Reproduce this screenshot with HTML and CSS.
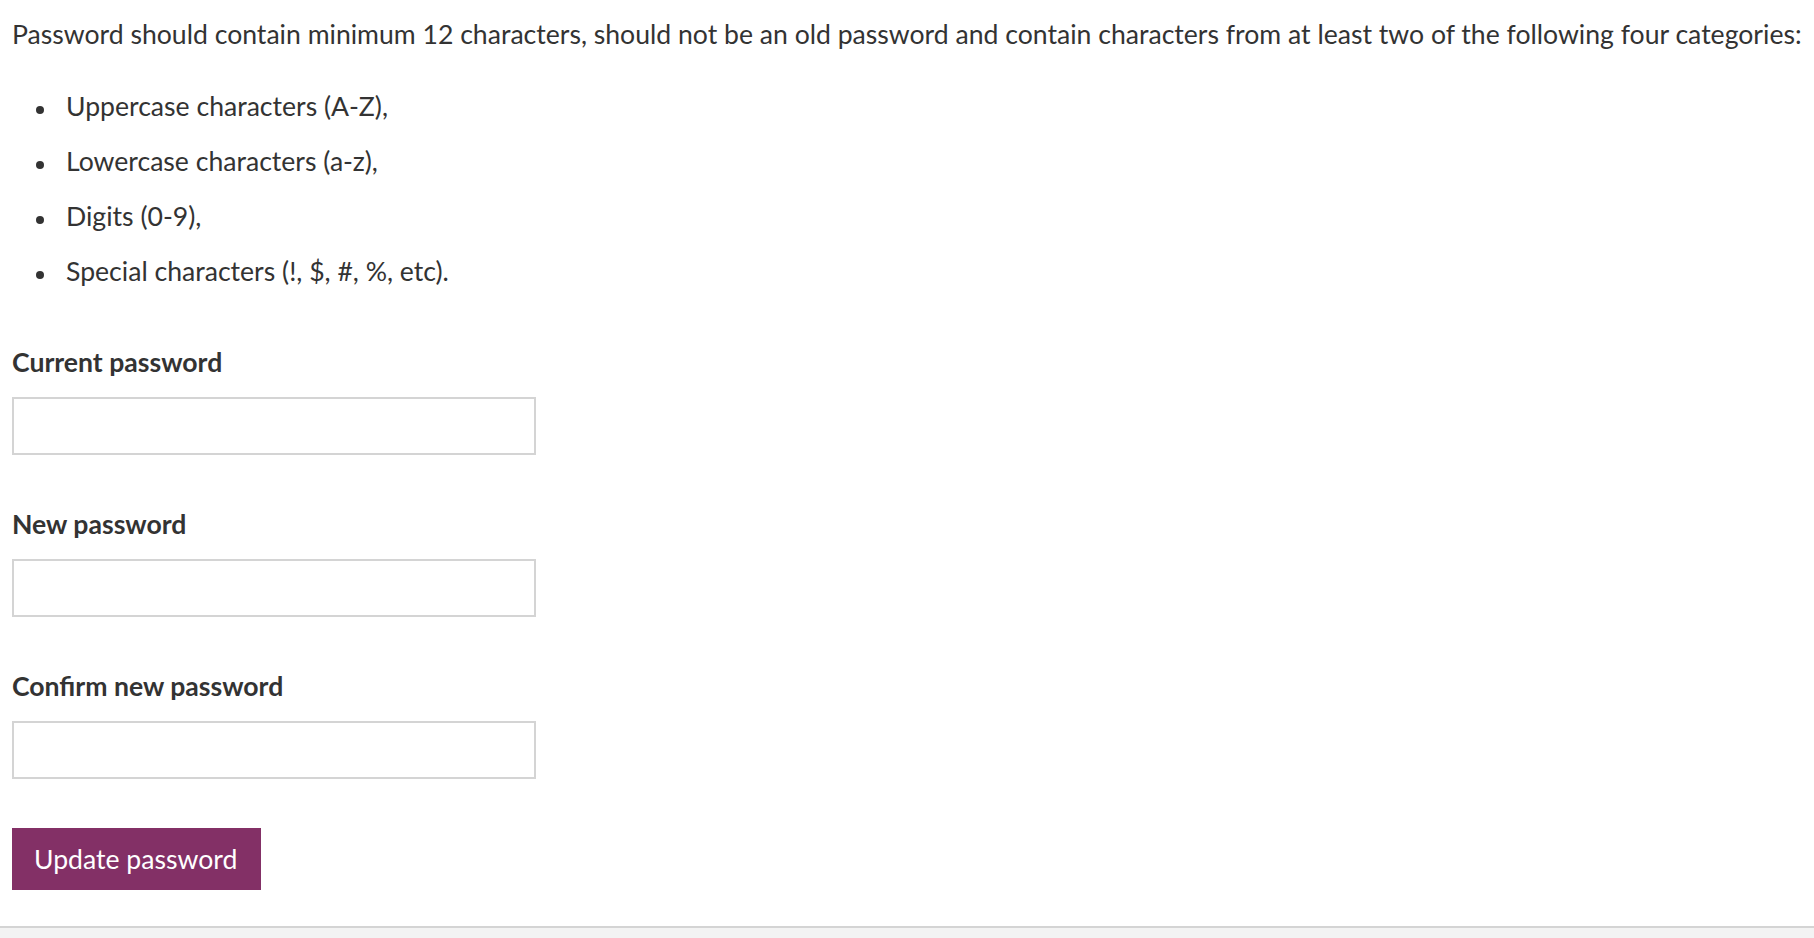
FILE: index.html
```html
<!DOCTYPE html>
<html lang="en">
<head>
<meta charset="utf-8">
<title>Update password</title>
<link rel="stylesheet" href="styles.css">
</head>
<body>
<div class="page">
  <form class="pw-form">
    <p class="intro">Password should contain minimum 12 characters, should not be an old password and contain characters from at least two of the following four categories:</p>
    <ul class="rules">
      <li>Uppercase characters (A-Z),</li>
      <li>Lowercase characters (a-z),</li>
      <li>Digits (0-9),</li>
      <li>Special characters (!, $, #, %, etc).</li>
    </ul>
    <div class="field">
      <label class="field-label" for="cur">Current password</label>
      <input class="field-input" id="cur" type="password">
    </div>
    <div class="field">
      <label class="field-label" for="new">New password</label>
      <input class="field-input" id="new" type="password">
    </div>
    <div class="field">
      <label class="field-label" for="conf">Confirm new password</label>
      <input class="field-input" id="conf" type="password">
    </div>
    <button class="btn-primary" type="button">Update password</button>
  </form>
</div>
<footer class="footer"></footer>
</body>
</html>
```
FILE: styles.css
```css
html, body {
  margin: 0;
  padding: 0;
  background: #ffffff;
}
body {
  font-family: Lato, "Open Sans", "Liberation Sans", sans-serif;
  font-size: 26.6px;
  color: #333333;
  display: flex;
  flex-direction: column;
  min-height: 938px;
}
.page {
  flex: 1;
  padding: 16px 2px 36px 12px;
}
.pw-form {
  display: flex;
  flex-direction: column;
  align-items: flex-start;
}
.intro {
  margin: 0;
  line-height: 36px;
}
.rules {
  margin: 27px 0 0 0;
  padding: 0;
  list-style: none;
}
.rules li {
  display: flex;
  align-items: center;
  line-height: 55px;
}
.rules li::before {
  content: "";
  flex: none;
  width: 8px;
  height: 8px;
  border-radius: 50%;
  background: #333333;
  margin: 6px 22px 0 24px;
}
.field {
  display: flex;
  flex-direction: column;
  align-items: flex-start;
  margin-top: 45px;
}
.field + .field {
  margin-top: 51px;
}
.field-label {
  font-weight: 700;
  line-height: 36px;
}
.field-input {
  margin-top: 17px;
  box-sizing: border-box;
  width: 524px;
  height: 58px;
  border: 2px solid #d4d4d4;
  border-radius: 0;
  background: #fff;
  font: inherit;
  padding: 0 12px;
  outline: none;
}
.btn-primary {
  margin-top: 49px;
  height: 62px;
  padding: 0 24px 0 22px;
  border: 0;
  border-radius: 0;
  background: #833066;
  color: #ffffff;
  font-family: inherit;
  font-size: 26.6px;
  line-height: 62px;
  cursor: pointer;
}
.footer {
  height: 10px;
  border-top: 2px solid #d4d4d4;
  background: #f3f3f3;
}
```
